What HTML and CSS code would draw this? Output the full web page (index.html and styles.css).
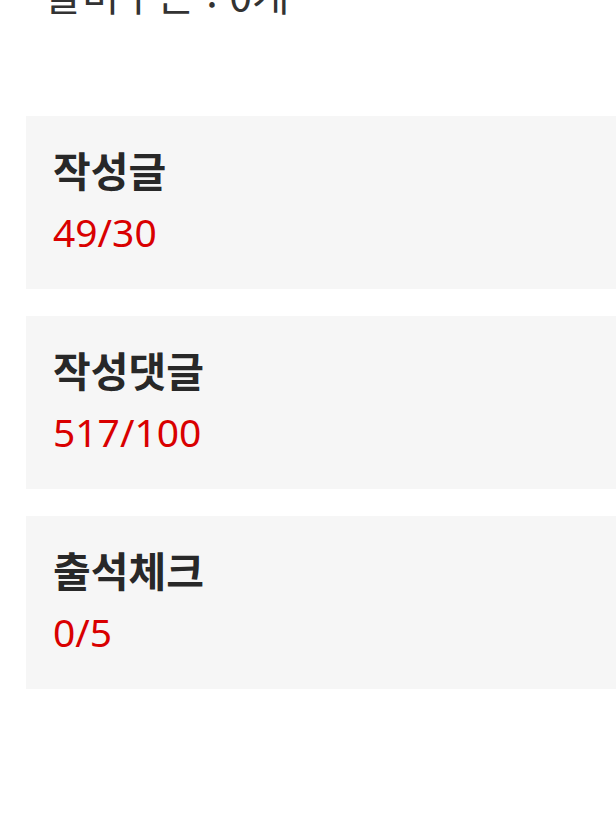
FILE: index.html
```html
<!DOCTYPE html>
<html lang="ko">
<head>
<meta charset="utf-8">
<link rel="stylesheet" href="styles.css">
</head>
<body>
<div class="page">
  <div class="summary">할미쿠폰 : 0개</div>
  <div class="cards">
    <div class="card">
      <div class="card-title">작성글</div>
      <div class="card-value">49/30</div>
    </div>
    <div class="card">
      <div class="card-title">작성댓글</div>
      <div class="card-value">517/100</div>
    </div>
    <div class="card">
      <div class="card-title">출석체크</div>
      <div class="card-value">0/5</div>
    </div>
  </div>
</div>
</body>
</html>
```
FILE: styles.css
```css
html, body {
  margin: 0;
  padding: 0;
  background: #ffffff;
}
body {
  overflow: hidden;
  font-family: "Noto Sans", "Noto Sans CJK KR", sans-serif;
}
.page {
  width: 616px;
  height: 824px;
  overflow: hidden;
}
.summary {
  margin-top: -31px;
  padding-left: 44px;
  font-family: "Noto Sans CJK KR", sans-serif;
  font-size: 41px;
  line-height: 48px;
  color: #333333;
  white-space: nowrap;
}
.cards {
  margin-top: 99px;
  padding-left: 26px;
  display: flex;
  flex-direction: column;
  gap: 27px;
}
.card {
  background: #f6f6f6;
  height: 173px;
  box-sizing: border-box;
  padding: 30px 0 0 27px;
  display: flex;
  flex-direction: column;
  gap: 17px;
}
.card-title {
  font-family: "Noto Sans CJK KR", sans-serif;
  font-weight: 700;
  font-size: 41px;
  line-height: 46px;
  color: #282828;
}
.card-value {
  font-family: "Noto Sans", "Open Sans", sans-serif;
  font-size: 39px;
  line-height: 46px;
  color: #d90000;
}
```
